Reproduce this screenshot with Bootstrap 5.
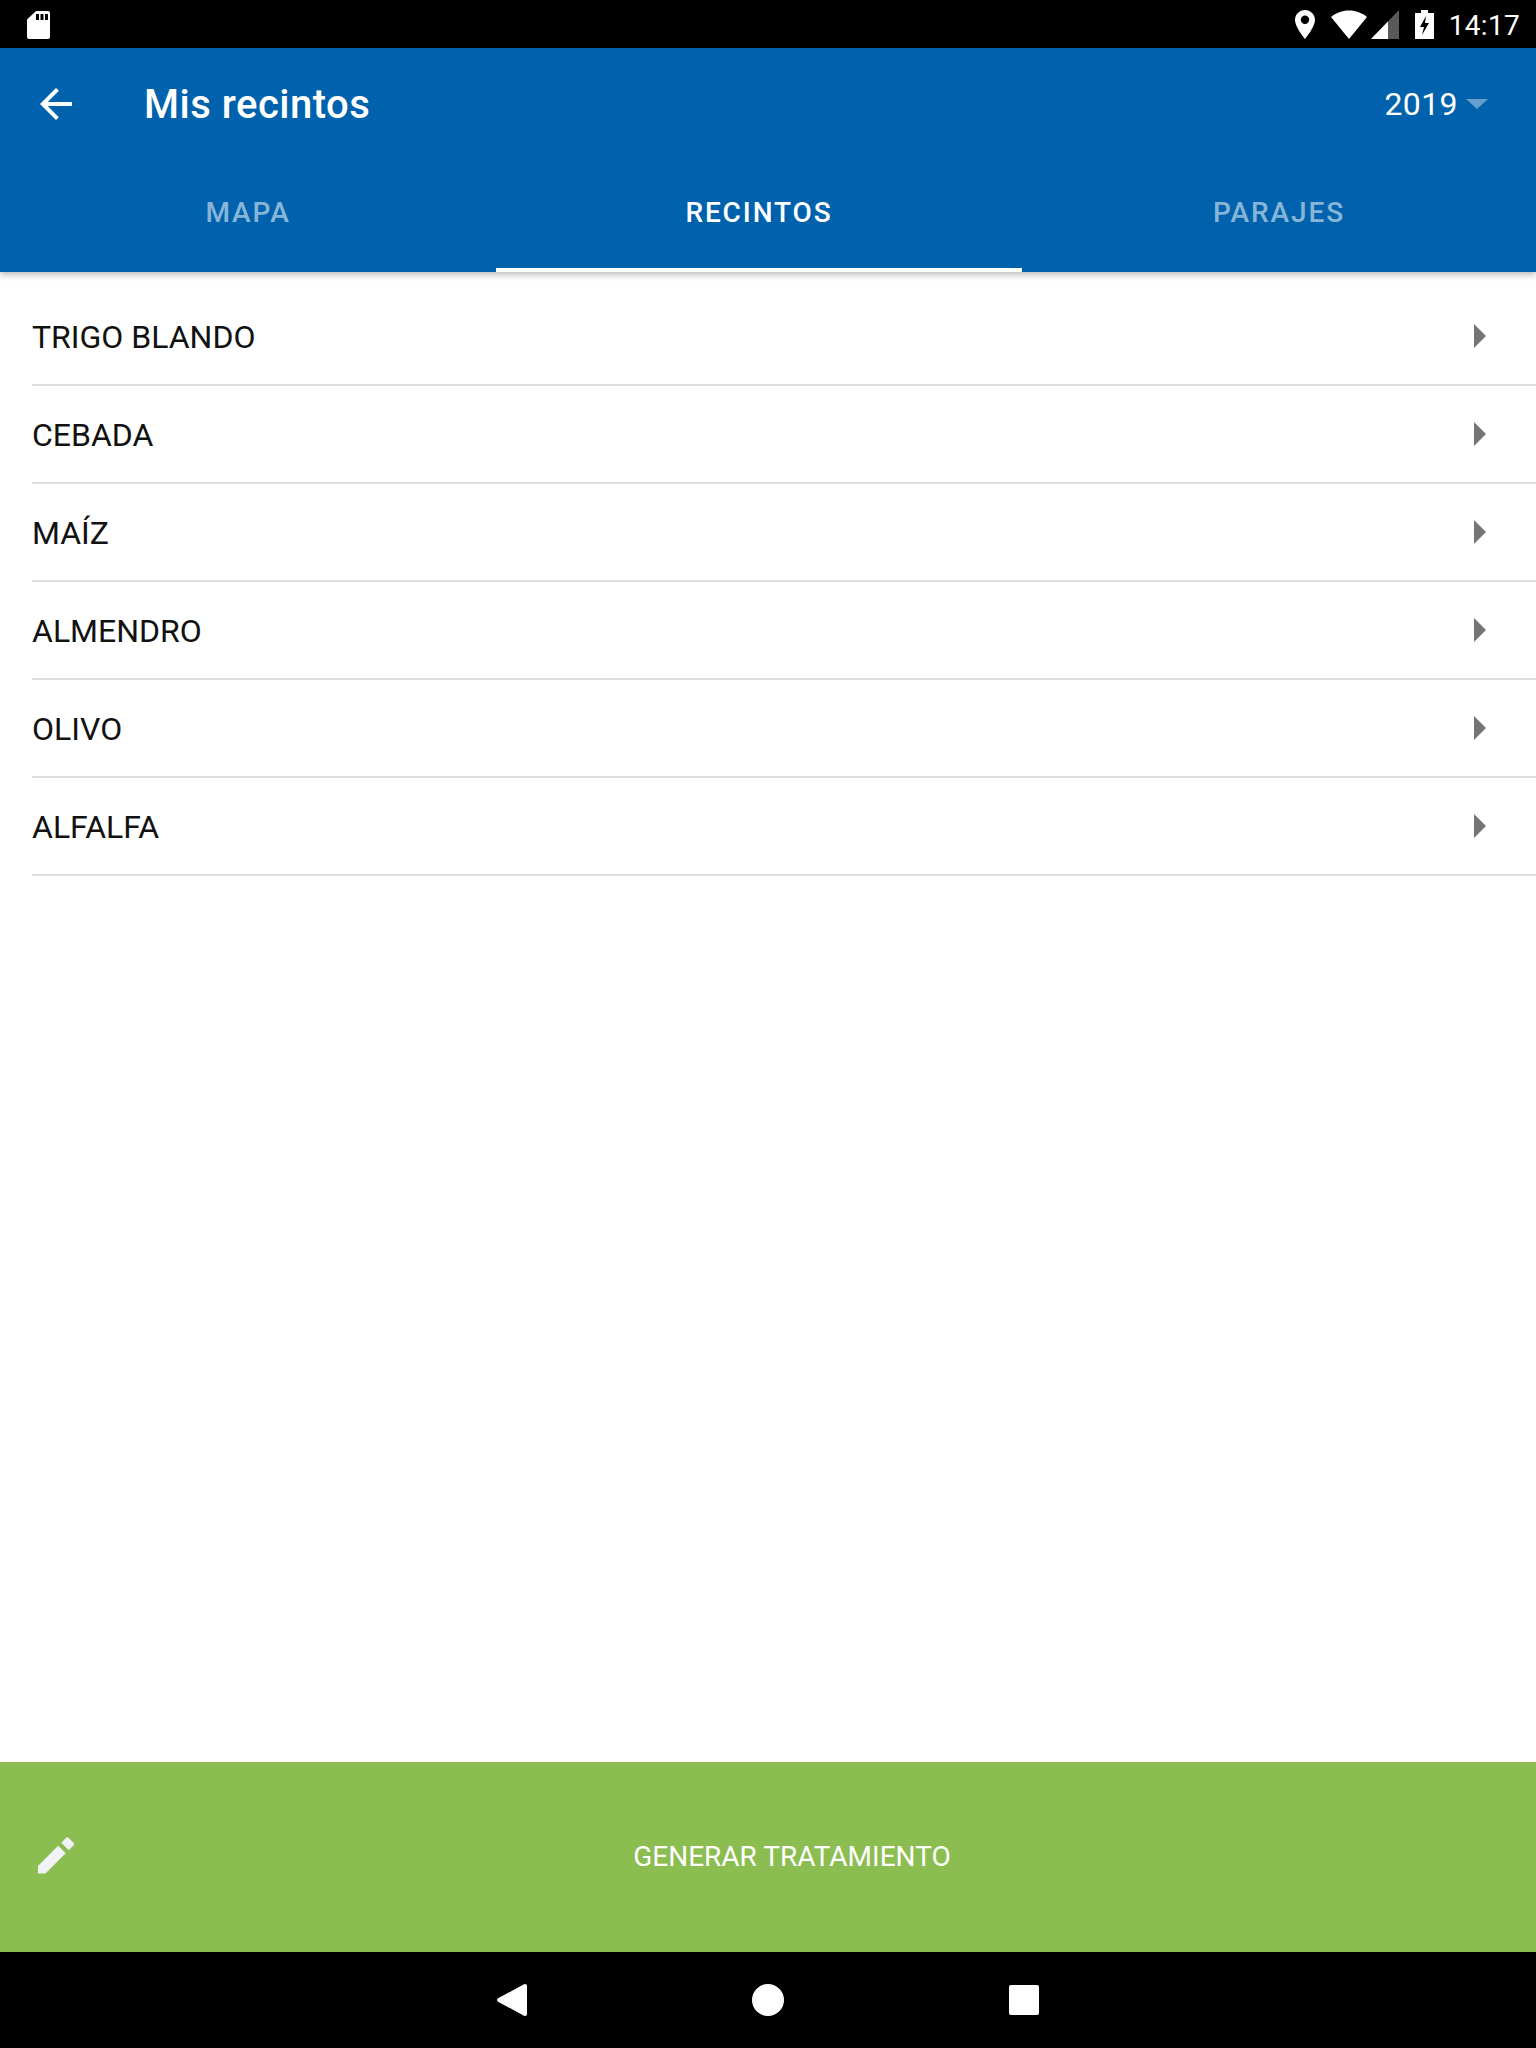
<!DOCTYPE html>
<html lang="es">
<head>
  <meta charset="utf-8">
  <title>Mis recintos</title>
  <link href="https://cdn.jsdelivr.net/npm/bootstrap@5.3.1/dist/css/bootstrap.min.css" rel="stylesheet">
  <style>
    body { font-family: Roboto, "Liberation Sans", sans-serif; background: #fff; }
    .app-screen { height: 2048px; overflow: hidden; }
    .app-screen > * { flex-shrink: 0; }

    /* status bar */
    .status-bar { height: 48px; background: #000; color: #fff; padding: 0 16px 0 27px; }
    .status-bar svg { display: block; }
    .status-time { font-size: 28px; line-height: 48px; margin-left: 15px; letter-spacing: .3px; padding-top: 4px; }

    /* app bar */
    .app-bar { height: 224px; background: #0062ad; color: #fff; box-shadow: 0 3px 6px rgba(0,0,0,.25); position: relative; z-index: 1; }
    .app-top { height: 112px; padding: 0 48px 0 40px; }
    .app-title { font-size: 40px; font-weight: 500; margin: 2px 0 0 72px; line-height: 1; letter-spacing: .5px; }
    .year-label { font-size: 32px; letter-spacing: .4px; }
    .year-caret { width: 0; height: 0; border-left: 11px solid transparent; border-right: 11px solid transparent; border-top: 10px solid rgba(255,255,255,.4); margin-left: 8px; }
    .tab-strip { height: 112px; }
    .tab-item { font-size: 28px; font-weight: 500; letter-spacing: 1.9px; color: rgba(255,255,255,.55); border-bottom: 4px solid transparent; padding-bottom: 3px; }
    .tab-item.on { color: #fff; border-bottom-color: #fff; }
    .tab-a { width: 496px; }
    .tab-b { width: 526px; }
    .tab-c { width: 514px; }

    /* list */
    .crop-list { padding-top: 16px; }
    .list-group-flush > .list-group-item.crop-row { height: 98px; margin-left: 32px; padding: 2px 50px 0 0; font-size: 32px; color: #111; border-width: 0 0 2px; border-color: #dcdcdc; }
    .crop-arrow { width: 0; height: 0; border-top: 12.5px solid transparent; border-bottom: 12.5px solid transparent; border-left: 12px solid #757575; margin-top: -2px; }

    /* bottom */
    .spacer-area { flex: 1 1 0; }
    .action-bar { height: 190px; background: #8cbd50; color: #fff; }
    .action-icon { width: 74px; padding-left: 38px; padding-bottom: 4px; flex: none; }
    .action-text { font-size: 28px; padding-right: 26px; }
    .nav-bar { height: 96px; background: #000; }
    .nav-cell { width: 256px; }
  </style>
</head>
<body>
<div class="app-screen d-flex flex-column">

  <!-- Status bar -->
  <div class="status-bar d-flex align-items-center">
    <svg width="23" height="29" viewBox="0 0 23 29"><path fill="#fff" d="M9 1h12a2 2 0 0 1 2 2v24a2 2 0 0 1-2 2H2a2 2 0 0 1-2-2V9.500z"/><path fill="#000" d="M9 4h3v6H9zM13.500 4h3v6h-3zM18 4h3v6h-3z"/></svg>
    <div class="d-flex align-items-center ms-auto">
      <svg width="20" height="29" viewBox="0 0 20 29"><path fill="#fff" fill-rule="evenodd" d="M10 0C4.500 0 0 4.400 0 10c0 7 10 19 10 19s10-12 10-19C20 4.400 15.500 0 10 0zm0 14a4.200 4.200 0 1 1 0-8.400A4.200 4.200 0 0 1 10 14z"/></svg>
      <svg class="ms-3" width="36" height="29" viewBox="0 0 36 29"><path fill="#fff" d="M18 29 0 7C5 3 11 .5 18 .5S31 3 36 7z"/></svg>
      <svg class="ms-1" width="28" height="29" viewBox="0 0 28 29"><path fill="#fff" d="M0 29 28 0v29z" opacity=".35"/><path fill="#fff" d="M0 29 17 11.400V29z"/></svg>
      <svg class="ms-3" width="19" height="29" viewBox="0 0 19 29"><path fill="#fff" d="M6 0h7v3h6v26H0V3h6z"/><path fill="#000" d="M11 6 5 17h4l-2 8 7-12h-4l1-7z"/></svg>
      <span class="status-time">14:17</span>
    </div>
  </div>

  <!-- App bar with tabs -->
  <div class="app-bar">
    <div class="app-top d-flex align-items-center">
      <svg width="32" height="32" viewBox="0 0 32 32"><path fill="#fff" d="M32 14H7.700L18.900 2.800 16 0 0 16l16 16 2.800-2.800L7.700 18H32z"/></svg>
      <h1 class="app-title">Mis recintos</h1>
      <div class="d-flex align-items-center ms-auto">
        <span class="year-label">2019</span>
        <span class="year-caret"></span>
      </div>
    </div>
    <div class="tab-strip d-flex">
      <div class="tab-item tab-a d-flex align-items-center justify-content-center">MAPA</div>
      <div class="tab-item tab-b on d-flex align-items-center justify-content-center">RECINTOS</div>
      <div class="tab-item tab-c d-flex align-items-center justify-content-center">PARAJES</div>
    </div>
  </div>

  <!-- Crops -->
  <div class="crop-list">
    <div class="list-group list-group-flush" id="cropList"></div>
  </div>
  <div class="spacer-area"></div>

  <!-- Action -->
  <div class="action-bar d-flex align-items-center">
    <div class="action-icon">
      <svg class="d-block" width="36" height="37" viewBox="0 0 38 38"><path fill="#f2f3f8" d="M0 30.100V38h7.900L29.200 16.700l-7.900-7.900zM37.400 8.500a2.100 2.100 0 0 0 0-3L32.500.6a2.100 2.100 0 0 0-3 0l-4.900 4.900 7.900 7.900z"/></svg>
    </div>
    <div class="action-text flex-grow-1 text-center">GENERAR TRATAMIENTO</div>
  </div>

  <!-- Android nav -->
  <div class="nav-bar d-flex align-items-center justify-content-center">
    <div class="nav-cell d-flex justify-content-center">
      <svg width="30" height="32" viewBox="0 0 30 32"><path fill="#fff" d="M28 0a2 2 0 0 1 2 2v28a2 2 0 0 1-3 1.700L1 17.700a2 2 0 0 1 0-3.400L27 .3A2 2 0 0 1 28 0z"/></svg>
    </div>
    <div class="nav-cell d-flex justify-content-center">
      <svg width="32" height="32" viewBox="0 0 32 32"><circle cx="16" cy="16" r="16" fill="#fff"/></svg>
    </div>
    <div class="nav-cell d-flex justify-content-center">
      <svg width="30" height="30" viewBox="0 0 30 30"><rect width="30" height="30" rx="2" fill="#fff"/></svg>
    </div>
  </div>
</div>

<script>
  const crops = ['TRIGO BLANDO', 'CEBADA', 'MAÍZ', 'ALMENDRO', 'OLIVO', 'ALFALFA'];
  const cropList = document.getElementById('cropList');

  crops.forEach(crop => {
    const row = document.createElement('div');
    row.className = 'list-group-item crop-row d-flex align-items-center justify-content-between';
    row.innerHTML = `<span>${crop}</span><span class="crop-arrow"></span>`;
    cropList.appendChild(row);
  });
</script>
<script src="https://cdn.jsdelivr.net/npm/bootstrap@5.3.1/dist/js/bootstrap.bundle.min.js"></script>
</body>
</html>
